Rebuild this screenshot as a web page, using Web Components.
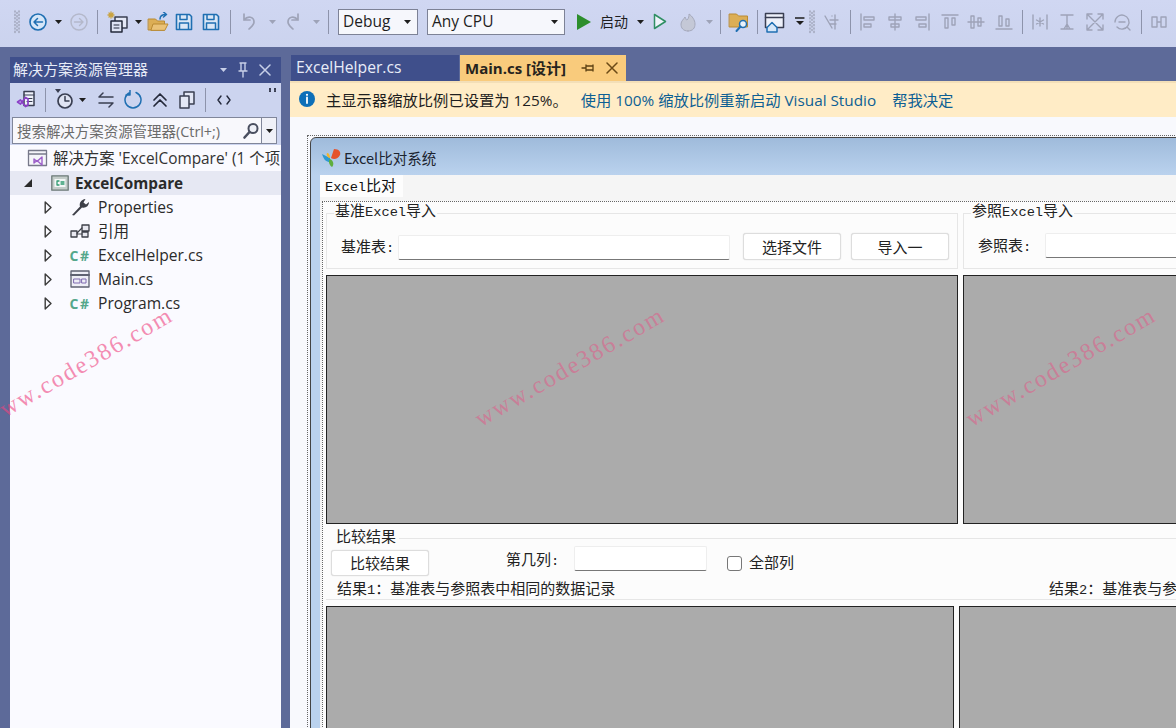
<!DOCTYPE html>
<html lang="zh"><head><meta charset="utf-8"><title>Excel</title>
<style>
html,body{margin:0;height:100%;overflow:hidden}
body{font:15px "Open Sans","Noto Sans CJK SC",sans-serif;color:#1e1e1e}
</style></head><body>
<vs-app>
  <vs-toolbar></vs-toolbar>
  <vs-solution></vs-solution>
  <vs-doc><win-form></win-form></vs-doc>
  <water-mark style="left:78px;--o:.6"></water-mark>
  <water-mark style="left:570px;--o:.42"></water-mark>
  <water-mark style="left:1061px;--o:.42"></water-mark>
</vs-app>
<script>
const g='#9ea3b8', b='#1f6fb2', d='#3a3f52';
const S=(w,h,c)=>`<svg width="${w}" height="${h}" viewBox="0 0 ${w} ${h}" fill="none" stroke-linecap="round" stroke-linejoin="round">${c}</svg>`;
const drop=(c='#1e1e1e')=>S(7,4,`<path d="M0 0h7L3.5 4z" fill="${c}"/>`);
const floppy=(o='')=>S(20,20,`${o}<path d="M2.5 2.5h13l2 2v13h-15z" fill="#dbe7f6" stroke="${b}" stroke-width="1.6"/><path d="M6 3v4.5h7V3M5.5 17v-6h9v6" stroke="${b}" stroke-width="1.5"/>`);
const alignIcon=p=>S(20,20,`<path d="${p}" stroke="${g}" stroke-width="1.4"/>`);
const I={
 grip:S(8,26,`<path d="M2 2v22M6 2v22" stroke="#a3a8bd" stroke-width="1.6" stroke-dasharray="1 2.4"/><path d="M4 3.500v20" stroke="#a3a8bd" stroke-width="1.6" stroke-dasharray="1 2.4"/>`),
 sep:S(1,24,`<path d="M.5 0v24" stroke="#8d93ab"/>`),
 drop:drop(), dropg:drop(g),
 back:S(20,20,`<circle cx="10" cy="10" r="8" fill="#d5e6f8" stroke="${b}" stroke-width="1.6"/><path d="M14.5 10H6M9.5 6.5 6 10l3.5 3.5" stroke="${b}" stroke-width="1.5"/>`),
 fwd:S(20,20,`<circle cx="10" cy="10" r="8" stroke="#b4b8ca" stroke-width="1.5"/><path d="M5.5 10H14M10.5 6.5 14 10l-3.5 3.5" stroke="#b4b8ca" stroke-width="1.4"/>`),
 newp:S(22,22,`<path d="M8 6h12v11H8z" stroke="${d}" stroke-width="1.5" fill="#e4e8f6"/><path d="M4 10h11v11H4z" stroke="#23283a" stroke-width="1.5" fill="#dfe4f4"/><path d="M4 1v6M1 4h6M2 2l4 4M6 2 2 6" stroke="#c9a23f" stroke-width="1.3"/><path d="M7 14h5M7 17h5" stroke="#23283a"/>`),
 open:S(22,20,`<path d="M1.5 7h7l2 2h7v9h-16z" fill="#dcae55" stroke="#b98a32"/><path d="M4 18l2-6h15l-3 6z" fill="#eac277" stroke="#b98a32"/><path d="M13 7c0-3 2-4.500 6-4.500M16.500 0 19.500 2.500 16.500 5" stroke="${b}" stroke-width="1.5"/>`),
 save:floppy(), saveall:floppy(),
 undo:S(20,20,`<path d="M5 2v6h6M5 8c4-5 10-3 10 2 0 3-3 5-5 7" stroke="${g}" stroke-width="1.7"/>`),
 redo:S(20,20,`<path d="M15 2v6H9M15 8C11 3 5 5 5 10c0 3 3 5 5 7" stroke="${g}" stroke-width="1.7"/>`),
 play:S(16,18,`<path d="M1 1v16l14-8z" fill="#2c8e2c"/>`),
 playo:S(14,17,`<path d="M1.500 1.500v14L12.500 8.500z" stroke="#2f8f63" stroke-width="1.5" fill="#eef2fa"/>`),
 fire:S(20,22,`<path d="M10 20c-5 0-7-3-7-7 0-3 3-5 4-7 1 2 1 3 2 3 2-2 2-4 2-6 3 2 6 6 6 10s-2 7-7 7z" fill="#c4c8d6" stroke="#a5a9bb"/>`),
 fsearch:S(22,22,`<path d="M1.500 3h7l2 2h9v11h-18z" fill="#dcae55" stroke="#b98a32"/><circle cx="15" cy="13" r="3.500" fill="#e8f2fb" stroke="${b}" stroke-width="1.500"/><path d="M12.500 15.500 8.500 20" stroke="${b}" stroke-width="2"/>`),
 win:S(22,22,`<path d="M1.500 2.500h18v14h-18z" fill="#eef1fa" stroke="${d}" stroke-width="1.500"/><path d="M1.500 6.500h18" stroke="${d}" stroke-width="1.500"/><path d="M3 16.500l5-5 5 5v4.500H3z" fill="#d5e6f8" stroke="${b}" stroke-width="1.500"/>`),
 dropu:S(10,9,`<path d="M0 1h9" stroke="#1e1e1e" stroke-width="1.300"/><path d="M1 4h8L5 8z" fill="#1e1e1e"/>`),
 tune:alignIcon('M3 4l7 12M10 4h0M8 8h8M8 12h6M13 3v14'),
 a1:alignIcon('M3 2v16M6 5h10v3H6zM6 12h7v3H6z'),
 a2:alignIcon('M10 2v16M4 5h12v3H4zM6 12h8v3H6z'),
 a3:alignIcon('M17 2v16M4 5h10v3H4zM7 12h7v3H7z'),
 a4:alignIcon('M2 3h16M5 6v10h3V6zM12 6v7h3V6z'),
 a5:alignIcon('M2 10h16M5 4v12h3V4zM12 6v8h3V6z'),
 a6:alignIcon('M2 17h16M5 4v10h3V4zM12 7v7h3V7z'),
 b1:alignIcon('M3 3v14M17 3v14M10 6v8M6.500 8l7 4M13.500 8l-7 4'),
 b2:alignIcon('M4 3h12M4 17h12M10 3v14M7 17l3-5 3 5'),
 b3:alignIcon('M2 7V2h5M13 2h5v5M18 13v5h-5M7 18H2v-5M3 3l14 14M17 3 3 17'),
 b4:alignIcon('M3 10a7 7 0 1 1 2 5M7 10h6M15 15l3 3'),
 c1:alignIcon('M3 5h5v10H3zM12 5h5v10h-5zM8 10h4'),
 vs:S(22,22,`<path d="M8 2.500h10v14H8z" fill="#eef1fa" stroke="${d}" stroke-width="1.500"/><path d="M8 6h10M11 9.500h5M11 12.500h5" stroke="${d}"/><path d="M1.500 13l3-2 5 6.500 2.500-1.500v-6l-2.500-1.500-5 6.500-3-2z" fill="none" stroke="#8b3fc7" stroke-width="1.700"/>`),
 clock:S(22,22,`<path d="M1 0h6L4 4z" fill="#3a3f52"/><circle cx="11" cy="12" r="7" fill="#dfe3f2" stroke="${d}" stroke-width="1.700"/><path d="M11 7.500V12h4" stroke="${d}" stroke-width="1.500"/>`),
 sync:S(18,16,`<path d="M16 5H2M6 1 2 5M2 11h14M12 15l4-4" stroke="${d}" stroke-width="1.500"/>`),
 refresh:S(20,20,`<path d="M7 2.500A8 8 0 1 0 13 2.500M7 0v5H3" stroke="${b}" stroke-width="1.500"/>`),
 collapse:S(16,16,`<path d="M2 8l6-6 6 6M2 14l6-6 6 6" stroke="#23283a" stroke-width="1.700"/>`),
 copy:S(20,20,`<path d="M7 2h10v12H7z" fill="#e3e7f5" stroke="${d}" stroke-width="1.500"/><path d="M3 6h9v12H3z" fill="#e3e7f5" stroke="${d}" stroke-width="1.500"/>`),
 code:S(14,10,`<path d="M4 1 1 5l3 4M10 1l3 4-3 4" stroke="#23283a" stroke-width="1.400"/>`),
 dots:S(8,4,`<path d="M1 0v4M6 0v4" stroke="#3a3f52" stroke-width="2" stroke-dasharray="2 1"/>`),
 glass:S(18,18,`<circle cx="11" cy="6.500" r="4.500" fill="#eef0f7" stroke="#4a4f60" stroke-width="2"/><path d="M7.500 10 2.500 15.500" stroke="#4a4f60" stroke-width="2.600"/>`),
 pin:S(12,16,`<path d="M3 1h6M4 1v8M8 1v8M2 9h8M6 9v6" stroke="#c7cfe8" stroke-width="1.400"/>`),
 x:S(12,12,`<path d="M1 1l10 10M11 1 1 11" stroke="#c7cfe8" stroke-width="1.500"/>`),
 xd:S(12,12,`<path d="M1 1l10 10M11 1 1 11" stroke="#6b4a16" stroke-width="1.500"/>`),
 pinh:S(14,10,`<path d="M1 5h4M5 2v6M5 3h7M5 7h7M12 2v6" stroke="#5b4012" stroke-width="1.300"/>`),
 dropw:drop('#c7cfe8'),
 triO:S(8,13,`<path d="M1.200 1v11L7 6.500z" fill="#fafaff" stroke="#3a3a3a" stroke-width="1.400"/>`),
 triF:S(10,10,`<path d="M9 1v8H1z" fill="#2a2a2a"/>`),
 sln:S(22,18,`<path d="M1.500 1.500h18v15h-18z" fill="#f5f5fa" stroke="#77798a" stroke-width="1.300"/><path d="M1.500 5h18" stroke="#77798a" stroke-width="1.300"/><path d="M7 10l3 2.500L15 8v8l-5-4.500L7 14z" fill="none" stroke="#9c5fc9" stroke-width="1.400"/>`),
 proj:S(18,16,`<path d="M.8.800h16.400v14.400H.8z" fill="#c3ccc9" stroke="#6c7a78" stroke-width="1.300"/><path d="M3.500 4h11v8h-11z" fill="#f3f6f6"/><path d="M8 6H6v4h2M10 7h3M10 9h3" stroke="#2f9a70" stroke-width="1.300"/>`),
 wrench:S(20,20,`<path d="M2 18 10 9.500C9 6 11 2.500 15.500 2l-2 3.500 2.500 2 3-2.500c0 4-3.500 6.500-7 5.500L4 18.500z" fill="#3d3f48"/>`),
 refs:S(20,14,`<path d="M1 7h6v6H1zM12 1h7v6h-7zM12 8h6v5h-6z" fill="#e8e8f0" stroke="#3d3f48" stroke-width="1.300"/><path d="M7 9l5-5M7 10h5" stroke="#3d3f48" stroke-width="1.200"/>`),
 formi:S(20,18,`<path d="M1 1h18v16H1z" fill="#eeeef6" stroke="#5f6272" stroke-width="1.300"/><path d="M1 5h18" stroke="#5f6272" stroke-width="2"/><path d="M4 9h6v4H4zM12 9h4v4h-4z" stroke="#7f6bb0"/>`),
 info:S(18,18,`<circle cx="9" cy="9" r="8" fill="#0d6fb8"/><path d="M9 7.500v5.500" stroke="#fff" stroke-width="1.800"/><circle cx="9" cy="4.800" r="1.100" fill="#fff"/>`),
 butterfly:S(22,20,`<path d="M10 10 2 6c2 6 4 8 8 8z" fill="#2d9ad2"/><path d="M11 10 14 1c5 0 7 3 6 6-2 4-6 5-9 3z" fill="#e5532d"/><path d="M9 10c-2-2-3-3-2-5 2 0 3 2 3 5z" fill="#f4b42a"/><path d="M10 11c-2 2-1 6 2 8 2-2 2-6-2-8z" fill="#5fae3d"/>`),
};
function def(name,css,html,after){
  customElements.define(name,class extends HTMLElement{
    connectedCallback(){ if(this.shadowRoot)return; const s=this.attachShadow({mode:'open'}); s.innerHTML=`<style>${css}</style>${html}`; after&&after(s,this);}
  });
}
def('vs-app',`:host{display:grid;grid-template-columns:281px 1fr;grid-template-rows:47px 1fr;height:728px;width:1176px;overflow:hidden;background:#5d6a99;position:relative}
 ::slotted(vs-toolbar){grid-column:1/3}`,`<slot></slot>`);

const items=[['grip',17,8],['back',38,20],['drop',58,7],['fwd',79,20],['sep',97,1],['newp',118,22],['drop',138,7],['open',158,22],['save',184,20],['saveall',211,20],['sep',230,1],['undo',249,20],['dropg',272,7],['redo',293,20],['dropg',316,7],['sep',328,1],
 ['combo:Debug',378,80],['combo:Any CPU',496,138],['play',584,16],['text:启动',616,32],['drop',640,7],['playo',660,14],['fire',688,20],['dropg',709,7],['sep',720,1],['fsearch',739,22],['sep',757,1],['win',775,22],['dropu',800,10],['grip',812,8],['tune',832,20],['sep',850,1],['a1',868,20],['a2',895,20],['a3',922,20],['a4',950,20],['a5',976,20],['a6',1004,20],['sep',1022,1],['b1',1040,20],['b2',1067,20],['b3',1095,20],['b4',1122,20],['sep',1141,1],['c1',1159,20]];
let prev=0;
const tb=items.map(([k,cx,w])=>{const left=cx-w/2,ml=left-prev;prev=left+w;
  const st=`margin-left:${ml}px;width:${w}px`;
  if(k.startsWith('combo:'))return `<span class="combo" style="${st}"><span>${k.slice(6)}</span>${I.drop}</span>`;
  if(k.startsWith('text:'))return `<span class="t" style="${st}">${k.slice(5)}</span>`;
  return `<span class="i" style="${st}">${I[k]}</span>`;}).join('');
def('vs-toolbar',`:host{display:flex;align-items:center;height:43px;padding-bottom:4px;background:linear-gradient(#d0d7f2,#cbd3ee);font-size:14.500px;white-space:nowrap;overflow:hidden}
 .i{display:flex;justify-content:center;align-items:center;flex:none}
 .t{flex:none;font-size:14px;padding-bottom:2px}
 .combo{flex:none;box-sizing:border-box;height:26px;display:flex;align-items:center;justify-content:space-between;padding:0 6px 0 4px;background:#f6f7fc;border:1px solid #7d8296;font-size:15.500px;line-height:1}`,tb);

const tree=[['sln','解决方案 \'ExcelCompare\' (1 个项',0],['proj','ExcelCompare',1],['wrench','Properties',2],['refs','引用',2],['cs','ExcelHelper.cs',2],['formi','Main.cs',2],['cs','Program.cs',2]];
const rows=tree.map(([ic,t,l])=>`<div class="row ${l==1?'sel':''} r${l}"><span class="ar a${l}">${l==1?I.triF:l==2?I.triO:''}</span><span class="ic">${ic=='cs'?'<b class="cs">C#</b>':I[ic]}</span><span class="tx"${t=='引用'?' style="padding-bottom:2px"':''}>${t}</span></div>`).join('');
def('vs-solution',`:host{display:flex;flex-direction:column;margin:10px 0 0 10px;width:271px;min-height:0;overflow:hidden}
 .h{height:26px;background:#3f4f8b;color:#e8ecf8;display:flex;align-items:center;padding:0 10px 0 3px;flex:none;font-size:15px}
 .h .n{flex:1;padding-bottom:3px}.h span{display:flex}.h .p{margin:0 10px 0 0}.h .q{margin-right:10px}
 .tb{height:34px;background:#ccd4ef;display:flex;align-items:center;flex:none;position:relative}
 .tb span{display:flex;flex:none}
 .dots{position:absolute;right:4px;top:5px}
 .s{height:28px;background:#ccd4ef;display:flex;flex:none;padding:0 4px 1px 2px;box-sizing:border-box}
 .box{flex:1;display:flex;align-items:center;background:#f8f8fc;border:1px solid #80869a;font-size:14.500px;color:#6b6b6b;white-space:nowrap;overflow:hidden;min-width:0}
 .box .q{flex:1;padding:0 0 1px 4px;overflow:hidden;letter-spacing:-.05px}
 .box .g{display:flex;padding-right:1px;flex:none}
 .box .dd{width:14px;align-self:stretch;border-left:1px solid #80869a;display:flex;align-items:center;justify-content:center;flex:none;background:#f0f1f8}
 .t{flex:1;background:#fafaff;padding-top:2px;overflow:hidden}
 .row{height:24px;display:flex;align-items:center;white-space:nowrap;color:#2a2a2a;overflow:hidden;font-size:15.600px}
 .row .ar{display:flex;justify-content:center;flex:none;width:12px}
 .a0{margin-left:5px;margin-right:1px}.a1{margin-left:12px;margin-right:17px}.a2{margin-left:32px;margin-right:15px}
 .ic{display:flex;justify-content:center;flex:none;width:22px;margin-right:7px}
 .cs{color:#55a78b;font:bold 14px "Open Sans",sans-serif;letter-spacing:1.500px}
 .sel{background:#e6e8f3;font-weight:700;font-size:15.300px}
 .r0{color:#333;font-size:15.400px;box-sizing:border-box;padding-bottom:3px}
 .r0 .ic{margin-left:-1px;margin-right:4px}
 .sel .ic{width:18px;margin-right:6px}`,
 `<div class="h"><span class="n">解决方案资源管理器</span><span class="p">${I.dropw}</span><span class="q">${I.pin}</span><span>${I.x}</span></div>
 <div class="tb"><span style="margin-left:6px">${I.vs}</span><span style="margin-left:7px">${I.sep}</span><span style="margin-left:8px">${I.clock}</span><span style="margin-left:3px">${I.drop}</span><span style="margin-left:11px">${I.sync}</span><span style="margin-left:8px">${I.refresh}</span><span style="margin-left:9px">${I.collapse}</span><span style="margin-left:9px">${I.copy}</span><span style="margin-left:8px">${I.sep}</span><span style="margin-left:11px">${I.code}</span><span class="dots">${I.dots}</span></div>
 <div class="s"><div class="box"><span class="q">搜索解决方案资源管理器(Ctrl+;)</span><span class="g">${I.glass}</span><span class="dd">${I.drop}</span></div></div>
 <div class="t">${rows}</div>`);

def('vs-doc',`:host{display:flex;flex-direction:column;margin:8px 0 0 9px;min-width:0;min-height:0;overflow:hidden}
 .tabs{display:flex;height:26px;flex:none;gap:1px;padding-left:1px}
 .tab{display:flex;align-items:center;box-sizing:border-box}
 .in{width:168px;background:#3f4f8b;color:#e8ecf8;padding:0 0 2px 5px;font-size:15.700px}
 .ac{width:166px;background:#f9cb7c;color:#26231d;font-weight:700;padding-left:5px;white-space:nowrap}
 .ac b{font-weight:700;padding-bottom:2px}.ac span{display:flex}
 .edge{height:2px;background:#f3dfb8;flex:none}
 .info{height:34px;flex:none;background:#ffecc6;display:flex;align-items:center;white-space:nowrap;padding:0 0 2px 8px;overflow:hidden;font-size:15.300px;box-sizing:border-box}
 .info span{display:flex}
 a{color:#0d5f94;text-decoration:none}
 .d{flex:1;background:#f8f9fd;padding:18px 0 0 17px;min-height:0;overflow:hidden}`,
 `<div class="tabs"><div class="tab in">ExcelHelper.cs</div><div class="tab ac"><b>Main.cs [设计]</b><span style="margin-left:15px">${I.pinh}</span><span style="margin-left:11px">${I.xd}</span></div></div>
 <div class="edge"></div>
 <div class="info"><span>${I.info}</span><span style="margin-left:10px">主显示器缩放比例已设置为 125%。</span><a style="margin-left:13px">使用 100% 缩放比例重新启动 Visual Studio</a><a style="margin-left:16px">帮我决定</a></div>
 <div class="d"><slot></slot></div>`);

const L=t=>`<span class="l">${t}</span>`;
def('win-form',`:host{display:block;width:1100px;height:700px;border:1px dotted #666;box-sizing:border-box;padding:1px 0 0 2px;
   font:15px "Noto Sans CJK SC",sans-serif;font-weight:300;color:#222;overflow:hidden}
 .l{font:13.700px "Liberation Mono",monospace}
 .w{border:1px solid #444;border-radius:6px 0 0 0;height:100%;box-sizing:border-box;padding:0 0 0 9px;display:flex;flex-direction:column;background:linear-gradient(#9fbbdb,#bad2ee 37px)}
 .title{height:37px;display:flex;align-items:center;font-size:14.500px;color:#1c2430;flex:none;padding-top:2px;box-sizing:border-box;font-weight:400}
 .title svg{margin-right:2px}
 .body{flex:1;background:#f5f5f5;display:flex;flex-direction:column;min-height:0}
 .strip{height:22px;flex:none;display:flex}
 .stab{width:83px;background:#fdfdfd;padding-left:5px;box-sizing:border-box;line-height:20px;color:#111;font-weight:400}
 .page{flex:1;margin:4px 0 0 2px;border:1px dotted #666;border-width:1px 0 0 1px;background:#fcfcfc;padding:1px 0 0 3px;display:flex;flex-direction:column}
 .top,.bot{display:grid;column-gap:5px;flex:none}
 .top{grid-template-columns:632px 400px}
 .bot{grid-template-columns:628px 400px}
 fieldset{margin:0;padding:0;border:1px solid #e6e6e6;min-width:0;height:66px;box-sizing:border-box;display:flex;align-items:center}
 legend{padding:0 1px;margin-left:7px;line-height:14px;height:20px;font-weight:400}
 .f{display:flex;align-items:center;margin-top:3px;width:100%}
 .lab{margin-left:14px;width:57px;flex:none;white-space:nowrap;font-weight:400;padding-bottom:3px}
 .inp{height:25px;background:#fff;border:1px solid #eee;border-bottom:1px solid #777;box-sizing:border-box;flex:none;border-radius:2px}
 .btn{width:98px;height:27px;background:#fff;border:1px solid #ddd;border-radius:3px;box-sizing:border-box;display:flex;align-items:center;justify-content:center;flex:none;font-weight:400;box-shadow:0 0 1px #ccc;padding-bottom:1px}
 .grid{background:#ababab;border:1px solid #222;box-sizing:border-box}
 .top .grid{height:249px;margin-top:6px}
 .cmp{margin-top:4px;flex:none;border-bottom:1px solid #e6e6e6;height:72px;box-sizing:border-box;width:100%}
 .cap{display:flex;align-items:center;height:20px;font-weight:400}
 .cap span{padding:0 3px 4px 10px;line-height:16px}
 .cap::after{content:"";flex:1;height:1px;background:#e6e6e6}
 .r1{display:flex;align-items:center;height:30px;font-weight:400}
 .r2{display:flex;align-items:center;height:22px;font-weight:400;white-space:nowrap;margin-top:-2px;overflow:hidden}
 .ck{width:15px;height:15px;border:1px solid #777;border-radius:3px;background:#fff;box-sizing:border-box;flex:none}
 .bot .grid{height:200px;margin-top:6px}`,
 `<div class="w"><div class="title">${I.butterfly}<span>Excel比对系统</span></div>
 <div class="body"><div class="strip"><div class="stab">${L('Excel')}比对</div></div>
 <div class="page">
  <div class="top">
   <fieldset><legend>基准${L('Excel')}导入</legend><div class="f"><span class="lab">基准表${L(':')}</span><span class="inp" style="width:332px"></span><span class="btn" style="margin-left:13px;margin-top:-1px">选择文件</span><span class="btn" style="margin-left:10px;margin-top:-1px">导入一</span></div></fieldset>
   <fieldset><legend>参照${L('Excel')}导入</legend><div class="f" style="margin-top:0"><span class="lab">参照表${L(':')}</span><span class="inp" style="width:332px;margin-left:10px"></span></div></fieldset>
   <div class="grid"></div><div class="grid"></div>
  </div>
  <div class="cmp"><div class="cap"><span>比较结果</span></div>
   <div class="r1"><span class="btn" style="margin-left:5px;height:26px">比较结果</span><span style="margin:-9px 0 0 77px;width:68px">第几列${L(':')}</span><span class="inp" style="width:133px;margin-top:-9px"></span><span class="ck" style="margin-left:20px"></span><span style="margin-left:7px;padding-bottom:3px">全部列</span></div>
   <div class="r2"><span style="margin-left:11px;width:712px;flex:none">结果${L('1')}&#xFF1A;基准表与参照表中相同的数据记录</span><span>结果${L('2')}&#xFF1A;基准表与参</span></div>
  </div>
  <div class="bot"><div class="grid"></div><div class="grid"></div></div>
 </div></div></div>`);

def('water-mark',`:host{position:absolute;top:367px;width:0;height:0;pointer-events:none;display:block}
 span{position:absolute;left:0;top:0;transform:translate(-50%,-50%) rotate(-30deg);font:24px "Liberation Serif",serif;letter-spacing:2px;color:#f0447f;opacity:var(--o,.6);white-space:nowrap}`,`<span>www.code386.com</span>`);
</script>
</body></html>
